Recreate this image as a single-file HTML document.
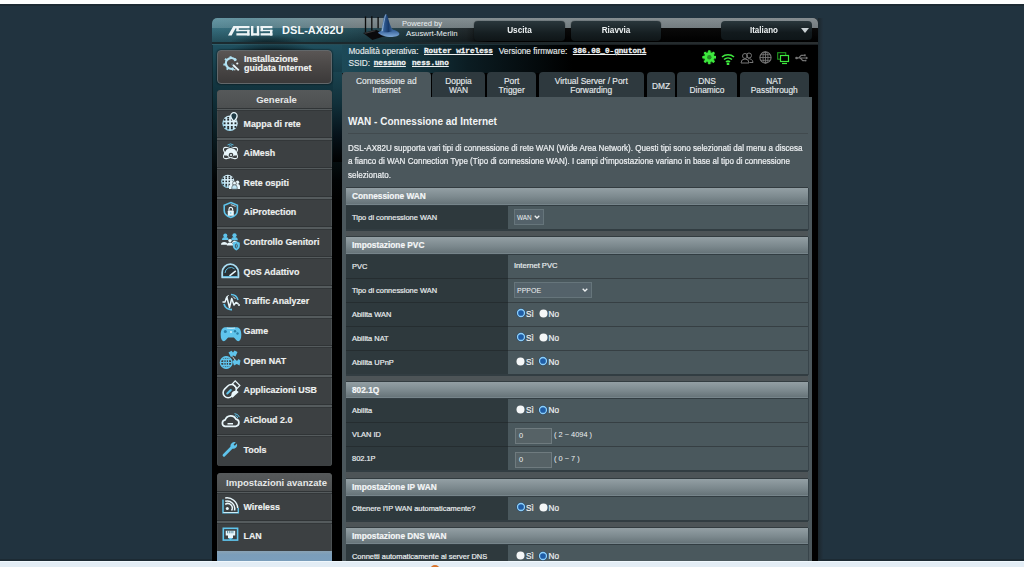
<!DOCTYPE html><html><head><meta charset="utf-8"><style>
*{margin:0;padding:0;box-sizing:border-box}
html,body{width:1024px;height:567px;overflow:hidden}
body{background:#21333f;font-family:"Liberation Sans",sans-serif;position:relative;color:#fff}
.a{position:absolute}
.nw{white-space:nowrap}
.st{-webkit-text-stroke:0.2px currentColor}
</style></head><body>
<div class="a" style="left:0;top:0;width:1024px;height:4px;background:#fdfefe"></div>
<div class="a" style="left:0;top:4px;width:1024px;height:2px;background:#1c2a33"></div>
<div class="a" style="left:212px;top:18px;width:606px;height:545px;background:#000;border-radius:5px 5px 0 0;overflow:hidden">
<div class="a" style="left:600px;top:0;width:6px;height:545px;background:#000"></div>
<div class="a" style="left:0;top:26px;width:1px;height:519px;background:linear-gradient(180deg,#16323b 0%,#081418 15%,#000 30%,#000 100%)"></div>
<div class="a" style="left:0;top:0;width:606px;height:10px;background:linear-gradient(180deg,rgba(255,255,255,0.07),rgba(0,0,0,0.07)),linear-gradient(90deg,#5b8f9d 0%,#5a8a97 6%,#6a8c95 14%,#7a878b 24%,#7c8488 100%)"></div>
<div class="a" style="left:0;top:10px;width:606px;height:14px;background:linear-gradient(180deg,rgba(255,255,255,0.04),rgba(0,0,0,0.25)),linear-gradient(90deg,#2f6878 0%,#2b6272 10%,#24545f 18%,#1f4550 25%,#1e3a42 31%,#1c2c31 37%,#1a2326 42%,#0a0d0e 44.5%,#000 46%,#000 100%)"></div>
<div class="a" style="left:15px;top:14px;width:80px;height:22px;background:radial-gradient(ellipse 50% 50% at 50% 60%,rgba(5,15,18,0.85),rgba(5,15,18,0) 100%)"></div>
<div class="a" style="left:0;top:24px;width:606px;height:1.5px;background:linear-gradient(90deg,#1b2b30,#1d2629 50%,#2a2f31)"></div>
<div class="a" style="left:0;top:25.5px;width:606px;height:1px;background:linear-gradient(90deg,#2f5f6c,#1f3a42 40%,#1a1f22 60%)"></div>
<div class="a" style="left:1px;top:27px;width:129px;height:520px;background:linear-gradient(180deg,#1f4f5e 0%,#163c48 5%,#10303a 10%,#0c232a 15%,#061114 21%,#010304 26%,#000 30%,#000 100%)"></div>
<div class="a" style="left:130px;top:27px;width:230px;height:28px;background:linear-gradient(90deg,#1d4a58 0%,#163b46 25%,#0b1c22 55%,#000 100%)"></div>
<div class="a" style="left:15px;top:26px;width:90px;height:20px;background:radial-gradient(ellipse 50% 50% at 50% 40%,rgba(5,15,18,0.8),rgba(5,15,18,0) 100%)"></div>
<div class="a" style="left:121px;top:54px;width:9px;height:90px;background:linear-gradient(180deg,#1a434f 0%,#11303a 35%,#06121a 70%,#000 100%)"></div>
</div>
<div class="a" style="left:817.5px;top:18px;width:5px;height:545px;background:linear-gradient(90deg,#1b262c,#22323e)"></div>
<svg class="a" style="left:228.3px;top:26.2px" width="44.4" height="9.5" viewBox="0 0 44.4 9.5"><g fill="#eef4f6"><path d="M0 9.5 L3.6 9.5 L7.6 2.2 L21.5 2.2 L21.5 0 L5.4 0 Z"/><rect x="8.4" y="2" width="2.4" height="3.2"/><rect x="8.4" y="3.8" width="13.1" height="1.4"/><rect x="19.1" y="3.8" width="2.4" height="5.7"/><rect x="8.4" y="7.2" width="13.1" height="2.3"/><rect x="23" y="0" width="2.4" height="9.5"/><rect x="28.8" y="0" width="2.4" height="9.5"/><rect x="23" y="7.2" width="8.2" height="2.3"/><rect x="32.6" y="0" width="11.8" height="2.2"/><rect x="32.6" y="0" width="2.4" height="5.2"/><rect x="32.6" y="3.8" width="11.8" height="1.4"/><rect x="42" y="3.8" width="2.4" height="5.7"/><rect x="32.6" y="7.2" width="11.8" height="2.3"/></g></svg>
<div class="a nw" style="left:282px;top:24px;font-size:11px;font-weight:bold;color:#f4f8f9;letter-spacing:0.05px">DSL-AX82U</div>
<svg class="a" style="left:358px;top:10px" width="48" height="34" viewBox="0 0 800 567"><defs><linearGradient id="hatg" x1="0" y1="0" x2="1" y2="0"><stop offset="0" stop-color="#6f98c8"/><stop offset="0.25" stop-color="#2f5a92"/><stop offset="0.6" stop-color="#183a6a"/><stop offset="1" stop-color="#3f6ca2"/></linearGradient><linearGradient id="brimg" x1="0" y1="0" x2="0" y2="1"><stop offset="0" stop-color="#2c5791"/><stop offset="1" stop-color="#7fa9d6"/></linearGradient></defs><path d="M125 110 V375 M230 105 V340 M335 115 V305" stroke="#0b0b0b" stroke-width="22"/><path d="M85 385 L300 330 L480 425 L240 500 Z" fill="#0a0a0c"/><path d="M95 383 L280 338 L300 352 L125 398 Z" fill="#3c3c3e"/><path d="M330 380 C350 400 420 445 520 450 C600 455 690 430 690 400 C690 370 640 345 590 330 C560 320 380 330 330 380 Z" fill="url(#brimg)"/><path d="M385 360 C400 300 410 220 425 150 C432 110 445 80 465 72 C480 70 492 95 500 130 C520 210 545 290 590 345 C530 375 430 380 385 360 Z" fill="url(#hatg)"/><path d="M465 72 C445 120 425 230 405 350" stroke="#c4dcf2" stroke-width="14" fill="none" opacity="0.7"/></svg>
<div class="a nw" style="left:402px;top:20px;font-size:7.6px;color:#e9eff1;line-height:8px">Powered by</div>
<div class="a nw" style="left:406px;top:29.7px;font-size:7.8px;color:#e9eff1;line-height:8px">Asuswrt-Merlin</div>
<div class="a" style="left:474px;top:21px;width:91px;height:20px;border-radius:4px;background:linear-gradient(180deg,#2a373c 0%,#161f22 60%,#0f1517 100%);box-shadow:0 0 1px #000"></div>
<div class="a nw" style="left:474px;top:21.8px;width:91px;height:20px;line-height:18px;text-align:center;font-size:8.2px;font-weight:bold;color:#eef2f3;transform:scaleY(1.17)">Uscita</div>
<div class="a" style="left:571px;top:21px;width:90px;height:20px;border-radius:4px;background:linear-gradient(180deg,#2a373c 0%,#161f22 60%,#0f1517 100%);box-shadow:0 0 1px #000"></div>
<div class="a nw" style="left:571px;top:21.8px;width:90px;height:20px;line-height:18px;text-align:center;font-size:8.2px;font-weight:bold;color:#eef2f3;transform:scaleY(1.17)">Riavvia</div>
<div class="a" style="left:721px;top:21px;width:91px;height:19px;border-radius:4px;background:linear-gradient(180deg,#2a373c 0%,#121a1d 60%,#0e1518 100%)"></div>
<div class="a nw" style="left:721px;top:21.8px;width:86px;height:19px;line-height:17px;text-align:center;font-size:8px;font-weight:bold;color:#eef2f3;transform:scaleY(1.17)">Italiano</div>
<div class="a" style="left:801px;top:28px;width:0;height:0;border-left:4px solid transparent;border-right:4px solid transparent;border-top:5px solid #c9d0d3"></div>
<div class="a nw" style="left:348.4px;top:46px;line-height:11px;font-size:8.3px;color:#e3e8ea;-webkit-text-stroke:0.15px #e3e8ea">Modalità operativa:</div>
<div class="a nw" style="left:424px;top:46px;line-height:11px;font-family:'Liberation Mono',monospace;font-weight:bold;text-decoration:underline;font-size:7.67px;color:#eef1f2;-webkit-text-stroke:0.3px #eef1f2">Router wireless</div>
<div class="a nw" style="left:498.7px;top:46px;line-height:11px;font-size:8.3px;color:#e3e8ea;-webkit-text-stroke:0.15px #e3e8ea">Versione firmware:</div>
<div class="a nw" style="left:572.8px;top:46px;line-height:11px;font-family:'Liberation Mono',monospace;font-weight:bold;text-decoration:underline;font-size:7.67px;color:#eef1f2;-webkit-text-stroke:0.3px #eef1f2">386.08_0-gnuton1</div>
<div class="a nw" style="left:348.4px;top:58px;line-height:11px;font-size:8.3px;color:#e3e8ea;-webkit-text-stroke:0.15px #e3e8ea">SSID:</div>
<div class="a nw" style="left:373.7px;top:58px;line-height:11px;font-family:'Liberation Mono',monospace;font-weight:bold;text-decoration:underline;font-size:7.67px;color:#eef1f2;-webkit-text-stroke:0.3px #eef1f2">nessuno</div>
<div class="a nw" style="left:412px;top:58px;line-height:11px;font-family:'Liberation Mono',monospace;font-weight:bold;text-decoration:underline;font-size:7.67px;color:#eef1f2;-webkit-text-stroke:0.3px #eef1f2">ness.uno</div>
<svg class="a" style="left:701.7px;top:50px" width="14.6" height="14.6" viewBox="0 0 14.6 14.6"><defs><filter id="glow" x="-30%" y="-30%" width="160%" height="160%"><feGaussianBlur stdDeviation="0.5"/></filter></defs><rect x="6.1" y="0.3" width="2.4" height="3" rx="0.5" fill="#3ee83e" transform="rotate(0 7.3 7.3)"/><rect x="6.1" y="0.3" width="2.4" height="3" rx="0.5" fill="#3ee83e" transform="rotate(45 7.3 7.3)"/><rect x="6.1" y="0.3" width="2.4" height="3" rx="0.5" fill="#3ee83e" transform="rotate(90 7.3 7.3)"/><rect x="6.1" y="0.3" width="2.4" height="3" rx="0.5" fill="#3ee83e" transform="rotate(135 7.3 7.3)"/><rect x="6.1" y="0.3" width="2.4" height="3" rx="0.5" fill="#3ee83e" transform="rotate(180 7.3 7.3)"/><rect x="6.1" y="0.3" width="2.4" height="3" rx="0.5" fill="#3ee83e" transform="rotate(225 7.3 7.3)"/><rect x="6.1" y="0.3" width="2.4" height="3" rx="0.5" fill="#3ee83e" transform="rotate(270 7.3 7.3)"/><rect x="6.1" y="0.3" width="2.4" height="3" rx="0.5" fill="#3ee83e" transform="rotate(315 7.3 7.3)"/><circle cx="7.3" cy="7.3" r="5" fill="#3ee83e"/><circle cx="7.3" cy="7.3" r="2.2" fill="#1f6a1f"/><circle cx="7.3" cy="7.3" r="6.5" fill="#3ee83e" opacity="0.25" filter="url(#glow)"/></svg>
<svg class="a" style="left:720.5px;top:51.5px" width="14" height="13" viewBox="0 0 14 13"><path d="M1 5 A9 9 0 0 1 13 5 M3 7.5 A6 6 0 0 1 11 7.5 M5 10 A3 3 0 0 1 9 10" stroke="#3ee83e" stroke-width="1.6" fill="none"/><circle cx="7" cy="12" r="1.4" fill="#3ee83e"/></svg>
<svg class="a" style="left:739.5px;top:52px" width="14" height="12" viewBox="0 0 14 12"><circle cx="5" cy="4" r="2.5" fill="none" stroke="#767676" stroke-width="1"/><path d="M1 11 A4 4 0 0 1 9 11 Z" fill="none" stroke="#767676" stroke-width="1"/><circle cx="9" cy="3.5" r="2.5" fill="none" stroke="#767676" stroke-width="1"/><path d="M8 6.8 A4 4 0 0 1 13 10.5 H9.5" fill="none" stroke="#767676" stroke-width="1"/></svg>
<svg class="a" style="left:758.5px;top:51px" width="13" height="13" viewBox="0 0 13 13"><circle cx="6.5" cy="6.5" r="5.6" fill="none" stroke="#767676" stroke-width="1.1"/><ellipse cx="6.5" cy="6.5" rx="2.52" ry="5.6" fill="none" stroke="#767676" stroke-width="0.8800000000000001"/><path d="M0.9000000000000004 6.5H12.1M1.7400000000000002 3.7H11.26M1.7400000000000002 9.3H11.26M6.5 0.9000000000000004V12.1" stroke="#767676" stroke-width="0.8800000000000001"/></svg>
<svg class="a" style="left:777px;top:52px" width="12.5" height="12.5" viewBox="0 0 12.5 12.5"><rect x="0.7" y="0.7" width="8" height="6.5" fill="none" stroke="#1f9a1f" stroke-width="1.1"/><rect x="3.5" y="3.5" width="8" height="6" fill="#000" stroke="#3ee83e" stroke-width="1.2"/><path d="M5 11.5 H10" stroke="#3ee83e" stroke-width="1.2"/></svg>
<svg class="a" style="left:795px;top:53.8px" width="13.5" height="8" viewBox="0 0 13 7"><circle cx="1.5" cy="3.5" r="1.3" fill="#767676"/><path d="M1.5 3.5 H11 M3.5 3.5 L6 1 H8.5 M5 3.5 L7.5 6 H9.5" stroke="#767676" stroke-width="1.1" fill="none"/><path d="M12.8 3.5 L10.5 2.1 V4.9Z" fill="#767676"/><rect x="8.5" y="0" width="1.8" height="1.8" fill="#767676"/><circle cx="10.2" cy="6" r="0.9" fill="#767676"/></svg>
<div class="a" style="left:216.5px;top:50px;width:115.5px;height:34px;border-radius:4px;background:linear-gradient(180deg,#5a5655 0%,#4b4847 45%,#3b3939 100%);border:1px solid #62676a;box-shadow:0 0 2px #000"></div>
<svg class="a" style="left:221.5px;top:53.5px;overflow:visible" width="22" height="20" viewBox="0 0 22 20"><rect x="7.6" y="2.2" width="2" height="2.6" fill="#a5dcf0" transform="rotate(-100 8.6 9.5)"/><rect x="7.6" y="2.2" width="2" height="2.6" fill="#a5dcf0" transform="rotate(-50 8.6 9.5)"/><rect x="7.6" y="2.2" width="2" height="2.6" fill="#a5dcf0" transform="rotate(0 8.6 9.5)"/><rect x="7.6" y="2.2" width="2" height="2.6" fill="#a5dcf0" transform="rotate(50 8.6 9.5)"/><rect x="7.6" y="2.2" width="2" height="2.6" fill="#a5dcf0" transform="rotate(-150 8.6 9.5)"/><rect x="7.6" y="2.2" width="2" height="2.6" fill="#a5dcf0" transform="rotate(160 8.6 9.5)"/><path d="M13.8 6.8 A5.3 5.3 0 1 0 11.5 14.2" fill="none" stroke="#b3e2f3" stroke-width="2.3"/><path d="M10.8 10.8 L16.8 16.4" stroke="#e8f6fb" stroke-width="1.9"/><path d="M9.5 9.6 L11 11" stroke="#5a6f78" stroke-width="1.9"/><circle cx="15.3" cy="9.5" r="1.1" fill="#e8f6fb"/><circle cx="12.8" cy="15.8" r="0.7" fill="#e8f6fb"/></svg>
<div class="a nw" style="left:244px;top:54.5px;font-size:9px;font-weight:bold;line-height:9.3px;color:#f0f2f2;-webkit-text-stroke:0.15px #f0f2f2">Installazione<br>guidata Internet</div>
<div class="a" style="left:216.5px;top:90px;width:115.5px;height:376px;border-radius:4px 4px 3px 3px;background:#3c4042;overflow:hidden;box-shadow:inset -1px 0 0 #4b5052,inset 1px 0 0 #45494b">
<div class="a" style="left:0;top:0;width:116px;height:19.5px;background:linear-gradient(180deg,#56595a 0%,#4b4e4f 100%)"></div>
<div class="a nw" style="left:0;top:0;width:116px;height:19.5px;line-height:20px;padding-left:4px;text-align:center;font-size:9.5px;font-weight:bold;color:#e6e8e8">Generale</div>
<div class="a" style="left:0;top:17.5px;width:116px;height:1px;background:#303436"></div>
<div class="a" style="left:0;top:18.5px;width:116px;height:1.5px;background:#555b5d"></div>
<div class="a" style="left:0;top:20.0px;width:116px;height:1px;background:#333739"></div>
<div class="a nw" style="left:27px;top:19.5px;height:29.65px;line-height:28.65px;font-size:8.9px;font-weight:bold;color:#eef0f0;-webkit-text-stroke:0.15px #eef0f0">Mappa di rete</div>
<div class="a" style="left:0;top:47.15px;width:116px;height:1px;background:#303436"></div>
<div class="a" style="left:0;top:48.15px;width:116px;height:1.5px;background:#555b5d"></div>
<div class="a" style="left:0;top:49.65px;width:116px;height:1px;background:#333739"></div>
<div class="a nw" style="left:27px;top:49.15px;height:29.65px;line-height:28.65px;font-size:8.9px;font-weight:bold;color:#eef0f0;-webkit-text-stroke:0.15px #eef0f0">AiMesh</div>
<div class="a" style="left:0;top:76.8px;width:116px;height:1px;background:#303436"></div>
<div class="a" style="left:0;top:77.8px;width:116px;height:1.5px;background:#555b5d"></div>
<div class="a" style="left:0;top:79.3px;width:116px;height:1px;background:#333739"></div>
<div class="a nw" style="left:27px;top:78.8px;height:29.65px;line-height:28.65px;font-size:8.9px;font-weight:bold;color:#eef0f0;-webkit-text-stroke:0.15px #eef0f0">Rete ospiti</div>
<div class="a" style="left:0;top:106.44999999999999px;width:116px;height:1px;background:#303436"></div>
<div class="a" style="left:0;top:107.44999999999999px;width:116px;height:1.5px;background:#555b5d"></div>
<div class="a" style="left:0;top:108.94999999999999px;width:116px;height:1px;background:#333739"></div>
<div class="a nw" style="left:27px;top:108.44999999999999px;height:29.65px;line-height:28.65px;font-size:8.9px;font-weight:bold;color:#eef0f0;-webkit-text-stroke:0.15px #eef0f0">AiProtection</div>
<div class="a" style="left:0;top:136.1px;width:116px;height:1px;background:#303436"></div>
<div class="a" style="left:0;top:137.1px;width:116px;height:1.5px;background:#555b5d"></div>
<div class="a" style="left:0;top:138.6px;width:116px;height:1px;background:#333739"></div>
<div class="a nw" style="left:27px;top:138.1px;height:29.65px;line-height:28.65px;font-size:8.9px;font-weight:bold;color:#eef0f0;-webkit-text-stroke:0.15px #eef0f0">Controllo Genitori</div>
<div class="a" style="left:0;top:165.75px;width:116px;height:1px;background:#303436"></div>
<div class="a" style="left:0;top:166.75px;width:116px;height:1.5px;background:#555b5d"></div>
<div class="a" style="left:0;top:168.25px;width:116px;height:1px;background:#333739"></div>
<div class="a nw" style="left:27px;top:167.75px;height:29.65px;line-height:28.65px;font-size:8.9px;font-weight:bold;color:#eef0f0;-webkit-text-stroke:0.15px #eef0f0">QoS Adattivo</div>
<div class="a" style="left:0;top:195.4px;width:116px;height:1px;background:#303436"></div>
<div class="a" style="left:0;top:196.4px;width:116px;height:1.5px;background:#555b5d"></div>
<div class="a" style="left:0;top:197.9px;width:116px;height:1px;background:#333739"></div>
<div class="a nw" style="left:27px;top:197.4px;height:29.65px;line-height:28.65px;font-size:8.9px;font-weight:bold;color:#eef0f0;-webkit-text-stroke:0.15px #eef0f0">Traffic Analyzer</div>
<div class="a" style="left:0;top:225.05px;width:116px;height:1px;background:#303436"></div>
<div class="a" style="left:0;top:226.05px;width:116px;height:1.5px;background:#555b5d"></div>
<div class="a" style="left:0;top:227.55px;width:116px;height:1px;background:#333739"></div>
<div class="a nw" style="left:27px;top:227.05px;height:29.65px;line-height:28.65px;font-size:8.9px;font-weight:bold;color:#eef0f0;-webkit-text-stroke:0.15px #eef0f0">Game</div>
<div class="a" style="left:0;top:254.7px;width:116px;height:1px;background:#303436"></div>
<div class="a" style="left:0;top:255.7px;width:116px;height:1.5px;background:#555b5d"></div>
<div class="a" style="left:0;top:257.2px;width:116px;height:1px;background:#333739"></div>
<div class="a nw" style="left:27px;top:256.7px;height:29.65px;line-height:28.65px;font-size:8.9px;font-weight:bold;color:#eef0f0;-webkit-text-stroke:0.15px #eef0f0">Open NAT</div>
<div class="a" style="left:0;top:284.34999999999997px;width:116px;height:1px;background:#303436"></div>
<div class="a" style="left:0;top:285.34999999999997px;width:116px;height:1.5px;background:#555b5d"></div>
<div class="a" style="left:0;top:286.84999999999997px;width:116px;height:1px;background:#333739"></div>
<div class="a nw" style="left:27px;top:286.34999999999997px;height:29.65px;line-height:28.65px;font-size:8.9px;font-weight:bold;color:#eef0f0;-webkit-text-stroke:0.15px #eef0f0">Applicazioni USB</div>
<div class="a" style="left:0;top:313.99999999999994px;width:116px;height:1px;background:#303436"></div>
<div class="a" style="left:0;top:314.99999999999994px;width:116px;height:1.5px;background:#555b5d"></div>
<div class="a" style="left:0;top:316.49999999999994px;width:116px;height:1px;background:#333739"></div>
<div class="a nw" style="left:27px;top:315.99999999999994px;height:29.65px;line-height:28.65px;font-size:8.9px;font-weight:bold;color:#eef0f0;-webkit-text-stroke:0.15px #eef0f0">AiCloud 2.0</div>
<div class="a" style="left:0;top:343.6499999999999px;width:116px;height:1px;background:#303436"></div>
<div class="a" style="left:0;top:344.6499999999999px;width:116px;height:1.5px;background:#555b5d"></div>
<div class="a" style="left:0;top:346.1499999999999px;width:116px;height:1px;background:#333739"></div>
<div class="a nw" style="left:27px;top:345.6499999999999px;height:29.65px;line-height:28.65px;font-size:8.9px;font-weight:bold;color:#eef0f0;-webkit-text-stroke:0.15px #eef0f0">Tools</div>
</div>
<div class="a" style="left:216.5px;top:473px;width:115.5px;height:127px;border-radius:4px 4px 3px 3px;background:#3c4042;overflow:hidden;box-shadow:inset -1px 0 0 #4b5052,inset 1px 0 0 #45494b">
<div class="a" style="left:0;top:0;width:116px;height:19.5px;background:linear-gradient(180deg,#56595a 0%,#4b4e4f 100%)"></div>
<div class="a nw" style="left:0;top:0;width:116px;height:19.5px;line-height:20px;padding-left:4px;text-align:center;font-size:9.5px;font-weight:bold;color:#e6e8e8">Impostazioni avanzate</div>
<div class="a" style="left:0;top:17.5px;width:116px;height:1px;background:#303436"></div>
<div class="a" style="left:0;top:18.5px;width:116px;height:1.5px;background:#555b5d"></div>
<div class="a" style="left:0;top:20.0px;width:116px;height:1px;background:#333739"></div>
<div class="a nw" style="left:27px;top:19.5px;height:29.8px;line-height:28.8px;font-size:8.9px;font-weight:bold;color:#eef0f0;-webkit-text-stroke:0.15px #eef0f0">Wireless</div>
<div class="a" style="left:0;top:47.3px;width:116px;height:1px;background:#303436"></div>
<div class="a" style="left:0;top:48.3px;width:116px;height:1.5px;background:#555b5d"></div>
<div class="a" style="left:0;top:49.8px;width:116px;height:1px;background:#333739"></div>
<div class="a nw" style="left:27px;top:49.3px;height:29.8px;line-height:28.8px;font-size:8.9px;font-weight:bold;color:#eef0f0;-webkit-text-stroke:0.15px #eef0f0">LAN</div>
</div>
<svg class="a" style="left:220px;top:113.8px;overflow:visible" width="22" height="20" viewBox="0 0 22 20"><defs><radialGradient id="sg10093" cx="0.65" cy="0.35" r="0.8"><stop offset="0" stop-color="#e4f4fb"/><stop offset="0.6" stop-color="#c9e9f6"/><stop offset="1" stop-color="#7fd0ef"/></radialGradient></defs><circle cx="10" cy="9.3" r="7.7" fill="url(#sg10093)"/><rect x="3.65" y="4.76" width="1.85" height="1.85" fill="#22292c"/><rect x="7.27" y="4.76" width="1.85" height="1.85" fill="#22292c"/><rect x="10.89" y="4.76" width="1.85" height="1.85" fill="#22292c"/><rect x="14.50" y="4.76" width="1.85" height="1.85" fill="#22292c"/><rect x="3.65" y="8.38" width="1.85" height="1.85" fill="#22292c"/><rect x="7.27" y="8.38" width="1.85" height="1.85" fill="#22292c"/><rect x="10.89" y="8.38" width="1.85" height="1.85" fill="#22292c"/><rect x="14.50" y="8.38" width="1.85" height="1.85" fill="#22292c"/><rect x="3.65" y="12.00" width="1.85" height="1.85" fill="#22292c"/><rect x="7.27" y="12.00" width="1.85" height="1.85" fill="#22292c"/><rect x="10.89" y="12.00" width="1.85" height="1.85" fill="#22292c"/><rect x="14.50" y="12.00" width="1.85" height="1.85" fill="#22292c"/><rect x="7.27" y="2.95" width="1.85" height="1.48" fill="#22292c"/><rect x="7.27" y="13.80" width="1.85" height="1.48" fill="#22292c"/><rect x="10.89" y="2.95" width="1.85" height="1.48" fill="#22292c"/><rect x="10.89" y="13.80" width="1.85" height="1.48" fill="#22292c"/><path d="M13.9 -1.3 a3.2 3.2 0 0 1 3.2 3.2 c0 2.2 -3.2 5.5 -3.2 5.5 c0 0 -3.2 -3.3 -3.2 -5.5 a3.2 3.2 0 0 1 3.2 -3.2z" fill="#1f3a44" stroke="#e8f6fb" stroke-width="1.3"/></svg>
<svg class="a" style="left:220px;top:142.0px;overflow:visible" width="22" height="20" viewBox="0 0 22 20"><ellipse cx="10.5" cy="11" rx="8.3" ry="3.6" fill="none" stroke="#e8f6fb" stroke-width="1.1" transform="rotate(35 10.5 11)"/><ellipse cx="10.5" cy="11" rx="8.3" ry="3.6" fill="none" stroke="#e8f6fb" stroke-width="1.1" transform="rotate(-35 10.5 11)"/><path d="M5 13.5 C3.5 13.5 3.5 10 5.5 9.8 C6 7 9 6 11 7.5 C13 5.8 16.5 7.5 16 10 C18 10.5 17.5 13.5 16 13.5 Z" fill="#e8f6fb"/><circle cx="11" cy="13" r="2.3" fill="#3c4042"/><circle cx="11" cy="13" r="1" fill="#e8f6fb"/><path d="M7.5 3 Q10.5 0.8 13.5 3 M8.8 4.3 Q10.5 3 12.2 4.3" stroke="#5fc4ec" stroke-width="0.9" fill="none"/></svg>
<svg class="a" style="left:220px;top:171.5px;overflow:visible" width="22" height="20" viewBox="0 0 22 20"><defs><radialGradient id="sg7894" cx="0.65" cy="0.35" r="0.8"><stop offset="0" stop-color="#e4f4fb"/><stop offset="0.6" stop-color="#c9e9f6"/><stop offset="1" stop-color="#7fd0ef"/></radialGradient></defs><circle cx="7.8" cy="9.4" r="6.6" fill="url(#sg7894)"/><rect x="2.36" y="5.51" width="1.58" height="1.58" fill="#22292c"/><rect x="5.46" y="5.51" width="1.58" height="1.58" fill="#22292c"/><rect x="8.56" y="5.51" width="1.58" height="1.58" fill="#22292c"/><rect x="11.66" y="5.51" width="1.58" height="1.58" fill="#22292c"/><rect x="2.36" y="8.61" width="1.58" height="1.58" fill="#22292c"/><rect x="5.46" y="8.61" width="1.58" height="1.58" fill="#22292c"/><rect x="8.56" y="8.61" width="1.58" height="1.58" fill="#22292c"/><rect x="11.66" y="8.61" width="1.58" height="1.58" fill="#22292c"/><rect x="2.36" y="11.71" width="1.58" height="1.58" fill="#22292c"/><rect x="5.46" y="11.71" width="1.58" height="1.58" fill="#22292c"/><rect x="8.56" y="11.71" width="1.58" height="1.58" fill="#22292c"/><rect x="11.66" y="11.71" width="1.58" height="1.58" fill="#22292c"/><rect x="5.46" y="3.96" width="1.58" height="1.27" fill="#22292c"/><rect x="5.46" y="13.26" width="1.58" height="1.27" fill="#22292c"/><rect x="8.56" y="3.96" width="1.58" height="1.27" fill="#22292c"/><rect x="8.56" y="13.26" width="1.58" height="1.27" fill="#22292c"/><circle cx="11.5" cy="10.2" r="1.7" fill="#e8f6fb"/><circle cx="17.5" cy="10.2" r="1.7" fill="#e8f6fb"/><circle cx="14.5" cy="11.2" r="1.9" fill="#e8f6fb" stroke="#3c4042" stroke-width="0.6"/><path d="M9 17 V14.5 a2.5 2.5 0 0 1 5 0 V17z M15 17 V14.5 a2.5 2.5 0 0 1 5 0 V17z" fill="#e8f6fb"/><path d="M11.8 17.2 V15.5 a2.7 2.7 0 0 1 5.4 0 V17.2z" fill="#bfe6f5" stroke="#3c4042" stroke-width="0.6"/></svg>
<svg class="a" style="left:220px;top:200.2px;overflow:visible" width="22" height="20" viewBox="0 0 22 20"><path d="M10.8 2.6 L17.4 5.2 V10.5 C17.4 14 14.5 16.3 10.8 17.4 C7.1 16.3 4.2 14 4.2 10.5 V5.2 Z" fill="none" stroke="#5fc4ec" stroke-width="1.6"/><path d="M10.8 4.6 L15.6 6.4" stroke="#e8f6fb" stroke-width="0.8"/><rect x="7.8" y="10.6" width="6" height="5.2" rx="0.6" fill="#e8f6fb"/><path d="M9 10.6 V9.2 a1.8 1.8 0 0 1 3.6 0 V10.6" fill="none" stroke="#e8f6fb" stroke-width="1.2"/><rect x="10.4" y="12" width="0.8" height="2" fill="#5fc4ec"/></svg>
<svg class="a" style="left:220px;top:232.2px;overflow:visible" width="22" height="20" viewBox="0 0 22 20"><circle cx="5.3" cy="3.5" r="2" fill="#5fc4ec"/><path d="M2 8 a3.3 3 0 0 1 6.6 0z" fill="#5fc4ec"/><circle cx="14.5" cy="3.3" r="2.1" fill="#5fc4ec"/><path d="M11.2 8.3 a3.3 3.3 0 0 1 6.6 0z" fill="#5fc4ec"/><path d="M1 12.8 a3.2 2.8 0 0 1 6.4 0z" fill="#e8f6fb"/><circle cx="10" cy="8.6" r="1.7" fill="#e8f6fb"/><path d="M6.8 13.5 a3.2 3 0 0 1 6.4 0z" fill="#e8f6fb"/><path d="M12.5 11 a2.5 2.5 0 0 1 4 -1" stroke="#e8f6fb" stroke-width="1.2" fill="none"/><path d="M16.3 9.3 L19.8 10.7 V14 C19.8 16.3 18 17.8 16.3 18.5 C14.6 17.8 12.8 16.3 12.8 14 V10.7Z" fill="#5fc4ec"/><ellipse cx="16.3" cy="14" rx="1" ry="2" fill="none" stroke="#3c4042" stroke-width="0.8"/></svg>
<svg class="a" style="left:220px;top:260.7px;overflow:visible" width="22" height="20" viewBox="0 0 22 20"><path d="M2.2 16.4 V11.5 A8.1 8.3 0 0 1 18.4 11.5 V16.4 Z" fill="#2a3236" stroke="#a9dcf2" stroke-width="1.8" stroke-linejoin="round"/><path d="M5 12 A5.8 5.8 0 0 1 14.5 7.8" stroke="#5fc4ec" stroke-width="0.9" fill="none"/><path d="M9.5 14.8 L15.8 9.8" stroke="#e8f6fb" stroke-width="1.5"/><path d="M3 15.6 H17.6" stroke="#5fc4ec" stroke-width="0.9"/></svg>
<svg class="a" style="left:220px;top:291.5px;overflow:visible" width="22" height="20" viewBox="0 0 22 20"><path d="M11 2.5 A7.5 7.5 0 0 1 18 8" stroke="#5fc4ec" stroke-width="1.6" fill="none"/><path d="M4 12 A7.5 7.5 0 0 0 12 17.5" stroke="#5fc4ec" stroke-width="1.8" fill="none"/><path d="M2.5 10 L5 10 L6.8 5 L9.5 15.5 L11.7 6.5 L14 13 L16 10.5 L18.5 12" stroke="#e8f6fb" stroke-width="1.5" fill="none" stroke-linejoin="round"/><path d="M6 6.5 L8.5 3 M13 4.5 L15.5 7" stroke="#e8f6fb" stroke-width="1"/><circle cx="19" cy="13" r="1" fill="#e8f6fb"/></svg>
<svg class="a" style="left:220px;top:323.6px;overflow:visible" width="22" height="20" viewBox="0 0 22 20"><path d="M5 3.3 H17 C20 3.3 21.3 7 21.3 11 C21.3 15 20 17.2 18.2 17.2 C16.5 17.2 15.3 14.3 13.8 13.5 H8.2 C6.7 14.3 5.5 17.2 3.8 17.2 C2 17.2 0.7 15 0.7 11 C0.7 7 2 3.3 5 3.3Z" fill="#5fc4ec"/><circle cx="5.3" cy="7.5" r="1.5" fill="#2a7fa8"/><circle cx="15" cy="7.2" r="1.2" fill="#2a7fa8"/><circle cx="17.5" cy="9.5" r="1.2" fill="#2a7fa8"/><circle cx="11" cy="8" r="0.9" fill="#e8f6fb"/><path d="M6.8 4 C9 4.5 13 4.5 15 4" stroke="#e8f6fb" stroke-width="0.8" fill="none"/></svg>
<svg class="a" style="left:220px;top:350.0px;overflow:visible" width="22" height="20" viewBox="0 0 22 20"><circle cx="6.2" cy="12.5" r="5.8" fill="none" stroke="#5fc4ec" stroke-width="1.4"/><ellipse cx="6.2" cy="12.5" rx="2.436" ry="5.8" fill="none" stroke="#5fc4ec" stroke-width="1.19"/><path d="M0.40000000000000036 12.5H12.0M1.096 9.716000000000001H11.304M1.096 15.283999999999999H11.304M6.2 6.7V18.3" stroke="#5fc4ec" stroke-width="1.19"/><path d="M8.5 2.5 L11.5 0.8 L13 2.5 L14.5 0.5 L17.5 2 L15.5 6.5 L13 5.5 L11 7.2 Z" fill="#5fc4ec"/><path d="M12.5 11 L15.5 9.5 L17 11 L18.5 9 L20.5 10.5 L19.5 15.5 L16.8 14 L14 15.5 Z" fill="#5fc4ec"/><path d="M12.5 6.5 L15 10" stroke="#e8f6fb" stroke-width="0.8"/></svg>
<svg class="a" style="left:220px;top:379.7px;overflow:visible" width="22" height="20" viewBox="0 0 22 20"><g transform="rotate(45 10.8 10)"><rect x="7.5" y="0.5" width="6.6" height="3.8" fill="none" stroke="#e8f6fb" stroke-width="1.2"/><rect x="5.8" y="4.3" width="10" height="14.5" rx="5" fill="none" stroke="#e8f6fb" stroke-width="1.6"/><rect x="9.8" y="9" width="2" height="7" rx="1" fill="#5fc4ec"/></g><path d="M12.5 17.8 A4.2 4.2 0 0 1 18.7 12 Z" fill="#e8f6fb"/></svg>
<svg class="a" style="left:220px;top:409.5px;overflow:visible" width="22" height="20" viewBox="0 0 22 20"><path d="M5 16.3 H15.8 A3.6 3.6 0 0 0 16 9.2 A5.8 5.8 0 0 0 5.2 9.8 A3.3 3.3 0 0 0 5 16.3Z" fill="none" stroke="#e8f6fb" stroke-width="1.7"/><path d="M14.5 3.6 Q18 3.8 19.5 7.2 M14.8 5.6 Q17 5.8 17.8 8" stroke="#5fc4ec" stroke-width="1" fill="none"/><rect x="7.5" y="13" width="5.5" height="1.5" fill="#e8f6fb"/></svg>
<svg class="a" style="left:220px;top:438.7px;overflow:visible" width="22" height="20" viewBox="0 0 22 20"><path d="M3 15.2 L10.4 7.8 A4.2 4.2 0 0 1 15.8 3.2 L13.6 5.5 L14.8 6.7 L17 4.5 A4.2 4.2 0 0 1 12.4 9.8 L5 17.2 A1.4 1.4 0 0 1 3 15.2Z" fill="#5fc4ec"/></svg>
<svg class="a" style="left:220px;top:494.6px;overflow:visible" width="22" height="20" viewBox="0 0 22 20"><path d="M3 4.5 V17.8 H18.3 V13" fill="none" stroke="#5fc4ec" stroke-width="1.5"/><path d="M3.3 17.5 H18" stroke="#e8f6fb" stroke-width="0.8"/><circle cx="7.3" cy="13.5" r="1.5" fill="#e8f6fb"/><path d="M5.2 9.3 A4.5 4.5 0 0 1 11.5 15.5 M5.2 6.2 A7.6 7.6 0 0 1 14.5 15.5 M5.2 3 A10.8 10.8 0 0 1 17.7 13" stroke="#e8f6fb" stroke-width="1.5" fill="none"/></svg>
<svg class="a" style="left:220px;top:524.1px;overflow:visible" width="22" height="20" viewBox="0 0 22 20"><rect x="3.3" y="4.3" width="14.3" height="11.8" fill="none" stroke="#5fc4ec" stroke-width="1.6"/><path d="M5.7 6.8 H15.2 V11.5 H13 V14 H8 V11.5 H5.7 Z" fill="#e8f6fb"/><path d="M7.5 6.8 V9.3 M9.3 6.8 V9.3 M11.1 6.8 V9.3 M12.9 6.8 V9.3" stroke="#2b6a85" stroke-width="0.7"/><path d="M8 14 L10.5 16 L13 14" fill="#5fc4ec"/></svg>
<div class="a" style="left:216.5px;top:550.5px;width:115.5px;height:12px;background:linear-gradient(180deg,#8aa3b5 0%,#7b9db9 30%,#7b9fbd 100%)"></div>
<div class="a" style="left:341.7px;top:72px;width:89.30000000000001px;height:26px;border-radius:4px 4px 0 0;background:#4b575c"></div>
<div class="a nw" style="left:341.7px;top:76.8px;width:89.30000000000001px;text-align:center;font-size:8.4px;line-height:9.3px;color:#e3e8ea;-webkit-text-stroke:0.15px #e3e8ea">Connessione ad<br>Internet</div>
<div class="a" style="left:432px;top:72px;width:53px;height:25px;border-radius:4px 4px 0 0;background:#2e393e"></div>
<div class="a nw" style="left:432px;top:76.8px;width:53px;text-align:center;font-size:8.4px;line-height:9.3px;color:#e3e8ea;-webkit-text-stroke:0.15px #e3e8ea">Doppia<br>WAN</div>
<div class="a" style="left:486.8px;top:72px;width:49.599999999999966px;height:25px;border-radius:4px 4px 0 0;background:#2e393e"></div>
<div class="a nw" style="left:486.8px;top:76.8px;width:49.599999999999966px;text-align:center;font-size:8.4px;line-height:9.3px;color:#e3e8ea;-webkit-text-stroke:0.15px #e3e8ea">Port<br>Trigger</div>
<div class="a" style="left:538.6px;top:72px;width:105.29999999999995px;height:25px;border-radius:4px 4px 0 0;background:#2e393e"></div>
<div class="a nw" style="left:538.6px;top:76.8px;width:105.29999999999995px;text-align:center;font-size:8.4px;line-height:9.3px;color:#e3e8ea;-webkit-text-stroke:0.15px #e3e8ea">Virtual Server / Port<br>Forwarding</div>
<div class="a" style="left:646.6px;top:72px;width:28.799999999999955px;height:25px;border-radius:4px 4px 0 0;background:#2e393e"></div>
<div class="a nw" style="left:646.6px;top:81.5px;width:28.799999999999955px;text-align:center;font-size:8.4px;line-height:9.3px;color:#e3e8ea;-webkit-text-stroke:0.15px #e3e8ea">DMZ</div>
<div class="a" style="left:677.2px;top:72px;width:59.69999999999993px;height:25px;border-radius:4px 4px 0 0;background:#2e393e"></div>
<div class="a nw" style="left:677.2px;top:76.8px;width:59.69999999999993px;text-align:center;font-size:8.4px;line-height:9.3px;color:#e3e8ea;-webkit-text-stroke:0.15px #e3e8ea">DNS<br>Dinamico</div>
<div class="a" style="left:739.5px;top:72px;width:69.5px;height:25px;border-radius:4px 4px 0 0;background:#2e393e"></div>
<div class="a nw" style="left:739.5px;top:76.8px;width:69.5px;text-align:center;font-size:8.4px;line-height:9.3px;color:#e3e8ea;-webkit-text-stroke:0.15px #e3e8ea">NAT<br>Passthrough</div>
<div class="a" style="left:342px;top:97px;width:470px;height:470px;background:#4b575c"></div>
<div class="a nw" style="left:348px;top:116px;font-size:10px;font-weight:bold;color:#f2f4f5">WAN - Connessione ad Internet</div>
<div class="a" style="left:348px;top:133px;width:460px;height:1px;background:#414a4e"></div>
<div class="a nw" style="left:348px;top:142px;font-size:8.05px;line-height:11.3px;color:#eceff1;-webkit-text-stroke:0.2px #eceff1;transform:scaleY(1.15);transform-origin:0 0">DSL-AX82U supporta vari tipi di connessione di rete WAN (Wide Area Network). Questi tipi sono selezionati dal menu a discesa<br>a fianco di WAN Connection Type (Tipo di connessione WAN). I campi d'impostazione variano in base al tipo di connessione<br>selezionato.</div>
<div class="a" style="left:346px;top:188px;width:462px;height:17.5px;background:linear-gradient(180deg,#939fa4 0%,#7c898e 50%,#616e73 100%)"></div>
<div class="a" style="left:346px;top:187.2px;width:462px;height:0.8px;background:#333c40"></div>
<div class="a" style="left:346px;top:203.8px;width:462px;height:0.9px;background:#76848a"></div>
<div class="a nw" style="left:352px;top:188px;height:17.5px;line-height:16.8px;font-size:8.3px;font-weight:bold;color:#f4f6f7;-webkit-text-stroke:0.2px #f4f6f7">Connessione WAN</div>
<div class="a" style="left:346px;top:204.7px;width:462px;height:1px;background:#323d42"></div>
<div class="a" style="left:346px;top:205.5px;width:162px;height:24px;background:#2e393d;border-bottom:1.5px solid #252d30"></div>
<div class="a" style="left:508px;top:205.5px;width:300px;height:24px;background:#4a585d;border-bottom:1.5px solid #363f43"></div>
<div class="a nw st" style="left:352px;top:205.5px;height:24px;line-height:23px;font-size:7.45px;color:#e8ecee">Tipo di connessione WAN</div>
<div class="a" style="left:514px;top:209.0px;width:30px;height:15.5px;background:#54626a;border:1px solid #66757b"></div><div class="a nw" style="left:517px;top:209.5px;line-height:15.5px;font-size:6.4px;color:#eef1f2">WAN</div><svg class="a" style="left:534px;top:215.0px" width="6" height="4" viewBox="0 0 6 4"><path d="M0.7 0.7 L3 3 L5.3 0.7" stroke="#eef1f2" stroke-width="1.3" fill="none"/></svg>
<div class="a" style="left:346px;top:228.5px;width:462px;height:2px;background:#323d42"></div>
<div class="a" style="left:346px;top:230.5px;width:462px;height:5.5px;background:#4d5457"></div>
<div class="a" style="left:807.5px;top:188px;width:1px;height:41.5px;background:#38444a"></div>
<div class="a" style="left:346px;top:237px;width:462px;height:17.5px;background:linear-gradient(180deg,#939fa4 0%,#7c898e 50%,#616e73 100%)"></div>
<div class="a" style="left:346px;top:236.2px;width:462px;height:0.8px;background:#333c40"></div>
<div class="a" style="left:346px;top:252.8px;width:462px;height:0.9px;background:#76848a"></div>
<div class="a nw" style="left:352px;top:237px;height:17.5px;line-height:16.8px;font-size:8.3px;font-weight:bold;color:#f4f6f7;-webkit-text-stroke:0.2px #f4f6f7">Impostazione PVC</div>
<div class="a" style="left:346px;top:253.7px;width:462px;height:1px;background:#323d42"></div>
<div class="a" style="left:346px;top:254.5px;width:162px;height:24px;background:#2e393d;border-bottom:1.5px solid #252d30"></div>
<div class="a" style="left:508px;top:254.5px;width:300px;height:24px;background:#4a585d;border-bottom:1.5px solid #363f43"></div>
<div class="a nw st" style="left:352px;top:254.5px;height:24px;line-height:23px;font-size:7.45px;color:#e8ecee">PVC</div>
<div class="a nw" style="left:514px;top:253.5px;line-height:23px;font-size:7.6px;color:#e8ecee;-webkit-text-stroke:0.2px #e8ecee">Internet PVC</div>
<div class="a" style="left:346px;top:278.5px;width:162px;height:24px;background:#2e393d;border-bottom:1.5px solid #252d30"></div>
<div class="a" style="left:508px;top:278.5px;width:300px;height:24px;background:#4a585d;border-bottom:1.5px solid #363f43"></div>
<div class="a nw st" style="left:352px;top:278.5px;height:24px;line-height:23px;font-size:7.45px;color:#e8ecee">Tipo di connessione WAN</div>
<div class="a" style="left:514px;top:282.0px;width:78px;height:15.5px;background:#54626a;border:1px solid #66757b"></div><div class="a nw" style="left:517px;top:282.5px;line-height:15.5px;font-size:7px;color:#eef1f2">PPPOE</div><svg class="a" style="left:582px;top:288.0px" width="6" height="4" viewBox="0 0 6 4"><path d="M0.7 0.7 L3 3 L5.3 0.7" stroke="#eef1f2" stroke-width="1.3" fill="none"/></svg>
<div class="a" style="left:346px;top:302.5px;width:162px;height:24px;background:#2e393d;border-bottom:1.5px solid #252d30"></div>
<div class="a" style="left:508px;top:302.5px;width:300px;height:24px;background:#4a585d;border-bottom:1.5px solid #363f43"></div>
<div class="a nw st" style="left:352px;top:302.5px;height:24px;line-height:23px;font-size:7.45px;color:#e8ecee">Abilita WAN</div>
<svg class="a" style="left:515.5px;top:308.1px" width="10" height="10" viewBox="0 0 10 10"><circle cx="5" cy="5" r="4.6" fill="#1d3f66"/><circle cx="5" cy="5" r="3.5" fill="#1f5da6" stroke="#8ccff9" stroke-width="1.3"/></svg><div class="a nw" style="left:526.0px;top:302.5px;line-height:23px;font-size:8.2px;color:#eef1f2;-webkit-text-stroke:0.2px #eef1f2">Sì</div><svg class="a" style="left:538.5px;top:308.6px" width="9" height="9" viewBox="0 0 9 9"><circle cx="4.5" cy="4.5" r="4" fill="#f5f7f8"/></svg><div class="a nw" style="left:548.5px;top:302.5px;line-height:23px;font-size:8.2px;color:#eef1f2;-webkit-text-stroke:0.2px #eef1f2">No</div>
<div class="a" style="left:346px;top:326.5px;width:162px;height:24px;background:#2e393d;border-bottom:1.5px solid #252d30"></div>
<div class="a" style="left:508px;top:326.5px;width:300px;height:24px;background:#4a585d;border-bottom:1.5px solid #363f43"></div>
<div class="a nw st" style="left:352px;top:326.5px;height:24px;line-height:23px;font-size:7.45px;color:#e8ecee">Abilita NAT</div>
<svg class="a" style="left:515.5px;top:332.1px" width="10" height="10" viewBox="0 0 10 10"><circle cx="5" cy="5" r="4.6" fill="#1d3f66"/><circle cx="5" cy="5" r="3.5" fill="#1f5da6" stroke="#8ccff9" stroke-width="1.3"/></svg><div class="a nw" style="left:526.0px;top:326.5px;line-height:23px;font-size:8.2px;color:#eef1f2;-webkit-text-stroke:0.2px #eef1f2">Sì</div><svg class="a" style="left:538.5px;top:332.6px" width="9" height="9" viewBox="0 0 9 9"><circle cx="4.5" cy="4.5" r="4" fill="#f5f7f8"/></svg><div class="a nw" style="left:548.5px;top:326.5px;line-height:23px;font-size:8.2px;color:#eef1f2;-webkit-text-stroke:0.2px #eef1f2">No</div>
<div class="a" style="left:346px;top:350.5px;width:162px;height:24px;background:#2e393d;border-bottom:1.5px solid #252d30"></div>
<div class="a" style="left:508px;top:350.5px;width:300px;height:24px;background:#4a585d;border-bottom:1.5px solid #363f43"></div>
<div class="a nw st" style="left:352px;top:350.5px;height:24px;line-height:23px;font-size:7.45px;color:#e8ecee">Abilita UPnP</div>
<svg class="a" style="left:516.0px;top:356.6px" width="9" height="9" viewBox="0 0 9 9"><circle cx="4.5" cy="4.5" r="4" fill="#f5f7f8"/></svg><div class="a nw" style="left:526.0px;top:350.5px;line-height:23px;font-size:8.2px;color:#eef1f2;-webkit-text-stroke:0.2px #eef1f2">Sì</div><svg class="a" style="left:538px;top:356.1px" width="10" height="10" viewBox="0 0 10 10"><circle cx="5" cy="5" r="4.6" fill="#1d3f66"/><circle cx="5" cy="5" r="3.5" fill="#1f5da6" stroke="#8ccff9" stroke-width="1.3"/></svg><div class="a nw" style="left:548.5px;top:350.5px;line-height:23px;font-size:8.2px;color:#eef1f2;-webkit-text-stroke:0.2px #eef1f2">No</div>
<div class="a" style="left:346px;top:373.5px;width:462px;height:2px;background:#323d42"></div>
<div class="a" style="left:346px;top:375.5px;width:462px;height:5.5px;background:#4d5457"></div>
<div class="a" style="left:807.5px;top:237px;width:1px;height:137.5px;background:#38444a"></div>
<div class="a" style="left:346px;top:381.5px;width:462px;height:17.5px;background:linear-gradient(180deg,#939fa4 0%,#7c898e 50%,#616e73 100%)"></div>
<div class="a" style="left:346px;top:380.7px;width:462px;height:0.8px;background:#333c40"></div>
<div class="a" style="left:346px;top:397.3px;width:462px;height:0.9px;background:#76848a"></div>
<div class="a nw" style="left:352px;top:381.5px;height:17.5px;line-height:16.8px;font-size:8.3px;font-weight:bold;color:#f4f6f7;-webkit-text-stroke:0.2px #f4f6f7">802.1Q</div>
<div class="a" style="left:346px;top:398.2px;width:462px;height:1px;background:#323d42"></div>
<div class="a" style="left:346px;top:399.0px;width:162px;height:24px;background:#2e393d;border-bottom:1.5px solid #252d30"></div>
<div class="a" style="left:508px;top:399.0px;width:300px;height:24px;background:#4a585d;border-bottom:1.5px solid #363f43"></div>
<div class="a nw st" style="left:352px;top:399.0px;height:24px;line-height:23px;font-size:7.45px;color:#e8ecee">Abilita</div>
<svg class="a" style="left:516.0px;top:405.1px" width="9" height="9" viewBox="0 0 9 9"><circle cx="4.5" cy="4.5" r="4" fill="#f5f7f8"/></svg><div class="a nw" style="left:526.0px;top:399.0px;line-height:23px;font-size:8.2px;color:#eef1f2;-webkit-text-stroke:0.2px #eef1f2">Sì</div><svg class="a" style="left:538px;top:404.6px" width="10" height="10" viewBox="0 0 10 10"><circle cx="5" cy="5" r="4.6" fill="#1d3f66"/><circle cx="5" cy="5" r="3.5" fill="#1f5da6" stroke="#8ccff9" stroke-width="1.3"/></svg><div class="a nw" style="left:548.5px;top:399.0px;line-height:23px;font-size:8.2px;color:#eef1f2;-webkit-text-stroke:0.2px #eef1f2">No</div>
<div class="a" style="left:346px;top:423.0px;width:162px;height:24px;background:#2e393d;border-bottom:1.5px solid #252d30"></div>
<div class="a" style="left:508px;top:423.0px;width:300px;height:24px;background:#4a585d;border-bottom:1.5px solid #363f43"></div>
<div class="a nw st" style="left:352px;top:423.0px;height:24px;line-height:23px;font-size:7.45px;color:#e8ecee">VLAN ID</div>
<div class="a" style="left:515px;top:427.5px;width:37px;height:16px;background:#566266;border:1px solid #6f7b7f"></div><div class="a nw" style="left:519px;top:427.5px;line-height:16px;font-size:7.4px;color:#eef1f2">0</div><div class="a nw" style="left:554px;top:423.0px;line-height:24px;font-size:7.4px;color:#eef1f2">( 2 ~ 4094 )</div>
<div class="a" style="left:346px;top:447.0px;width:162px;height:24px;background:#2e393d;border-bottom:1.5px solid #252d30"></div>
<div class="a" style="left:508px;top:447.0px;width:300px;height:24px;background:#4a585d;border-bottom:1.5px solid #363f43"></div>
<div class="a nw st" style="left:352px;top:447.0px;height:24px;line-height:23px;font-size:7.45px;color:#e8ecee">802.1P</div>
<div class="a" style="left:515px;top:451.5px;width:37px;height:16px;background:#566266;border:1px solid #6f7b7f"></div><div class="a nw" style="left:519px;top:451.5px;line-height:16px;font-size:7.4px;color:#eef1f2">0</div><div class="a nw" style="left:554px;top:447.0px;line-height:24px;font-size:7.4px;color:#eef1f2">( 0 ~ 7 )</div>
<div class="a" style="left:346px;top:470.0px;width:462px;height:2px;background:#323d42"></div>
<div class="a" style="left:346px;top:472.0px;width:462px;height:5.5px;background:#4d5457"></div>
<div class="a" style="left:807.5px;top:381.5px;width:1px;height:89.5px;background:#38444a"></div>
<div class="a" style="left:346px;top:479px;width:462px;height:17.5px;background:linear-gradient(180deg,#939fa4 0%,#7c898e 50%,#616e73 100%)"></div>
<div class="a" style="left:346px;top:478.2px;width:462px;height:0.8px;background:#333c40"></div>
<div class="a" style="left:346px;top:494.8px;width:462px;height:0.9px;background:#76848a"></div>
<div class="a nw" style="left:352px;top:479px;height:17.5px;line-height:16.8px;font-size:8.3px;font-weight:bold;color:#f4f6f7;-webkit-text-stroke:0.2px #f4f6f7">Impostazione IP WAN</div>
<div class="a" style="left:346px;top:495.7px;width:462px;height:1px;background:#323d42"></div>
<div class="a" style="left:346px;top:496.5px;width:162px;height:24px;background:#2e393d;border-bottom:1.5px solid #252d30"></div>
<div class="a" style="left:508px;top:496.5px;width:300px;height:24px;background:#4a585d;border-bottom:1.5px solid #363f43"></div>
<div class="a nw st" style="left:352px;top:496.5px;height:24px;line-height:23px;font-size:7.45px;color:#e8ecee">Ottenere l'IP WAN automaticamente?</div>
<svg class="a" style="left:515.5px;top:502.1px" width="10" height="10" viewBox="0 0 10 10"><circle cx="5" cy="5" r="4.6" fill="#1d3f66"/><circle cx="5" cy="5" r="3.5" fill="#1f5da6" stroke="#8ccff9" stroke-width="1.3"/></svg><div class="a nw" style="left:526.0px;top:496.5px;line-height:23px;font-size:8.2px;color:#eef1f2;-webkit-text-stroke:0.2px #eef1f2">Sì</div><svg class="a" style="left:538.5px;top:502.6px" width="9" height="9" viewBox="0 0 9 9"><circle cx="4.5" cy="4.5" r="4" fill="#f5f7f8"/></svg><div class="a nw" style="left:548.5px;top:496.5px;line-height:23px;font-size:8.2px;color:#eef1f2;-webkit-text-stroke:0.2px #eef1f2">No</div>
<div class="a" style="left:346px;top:519.5px;width:462px;height:2px;background:#323d42"></div>
<div class="a" style="left:346px;top:521.5px;width:462px;height:5.5px;background:#4d5457"></div>
<div class="a" style="left:807.5px;top:479px;width:1px;height:41.5px;background:#38444a"></div>
<div class="a" style="left:346px;top:527.5px;width:462px;height:17.5px;background:linear-gradient(180deg,#939fa4 0%,#7c898e 50%,#616e73 100%)"></div>
<div class="a" style="left:346px;top:526.7px;width:462px;height:0.8px;background:#333c40"></div>
<div class="a" style="left:346px;top:543.3px;width:462px;height:0.9px;background:#76848a"></div>
<div class="a nw" style="left:352px;top:527.5px;height:17.5px;line-height:16.8px;font-size:8.3px;font-weight:bold;color:#f4f6f7;-webkit-text-stroke:0.2px #f4f6f7">Impostazione DNS WAN</div>
<div class="a" style="left:346px;top:544.2px;width:462px;height:1px;background:#323d42"></div>
<div class="a" style="left:346px;top:545.0px;width:162px;height:24px;background:#2e393d;border-bottom:1.5px solid #252d30"></div>
<div class="a" style="left:508px;top:545.0px;width:300px;height:24px;background:#4a585d;border-bottom:1.5px solid #363f43"></div>
<div class="a nw st" style="left:352px;top:545.0px;height:24px;line-height:23px;font-size:7.45px;color:#e8ecee">Connetti automaticamente al server DNS</div>
<svg class="a" style="left:516.0px;top:551.1px" width="9" height="9" viewBox="0 0 9 9"><circle cx="4.5" cy="4.5" r="4" fill="#f5f7f8"/></svg><div class="a nw" style="left:526.0px;top:545.0px;line-height:23px;font-size:8.2px;color:#eef1f2;-webkit-text-stroke:0.2px #eef1f2">Sì</div><svg class="a" style="left:538px;top:550.6px" width="10" height="10" viewBox="0 0 10 10"><circle cx="5" cy="5" r="4.6" fill="#1d3f66"/><circle cx="5" cy="5" r="3.5" fill="#1f5da6" stroke="#8ccff9" stroke-width="1.3"/></svg><div class="a nw" style="left:548.5px;top:545.0px;line-height:23px;font-size:8.2px;color:#eef1f2;-webkit-text-stroke:0.2px #eef1f2">No</div>
<div class="a" style="left:346px;top:568.0px;width:462px;height:2px;background:#323d42"></div>
<div class="a" style="left:346px;top:570.0px;width:462px;height:5.5px;background:#4d5457"></div>
<div class="a" style="left:807.5px;top:527.5px;width:1px;height:41.5px;background:#38444a"></div>
<div class="a" style="left:0;top:559px;width:212px;height:2px;background:#1c2a33"></div>
<div class="a" style="left:818px;top:559px;width:206px;height:2px;background:#1c2a33"></div>
<div class="a" style="left:0;top:561px;width:1024px;height:6px;background:#e3edf5;border-top:1px solid #f0f8fd"></div>
<div class="a" style="left:430px;top:564.5px;width:10px;height:10px;border-radius:50%;background:#d9742c"></div>
</body></html>
